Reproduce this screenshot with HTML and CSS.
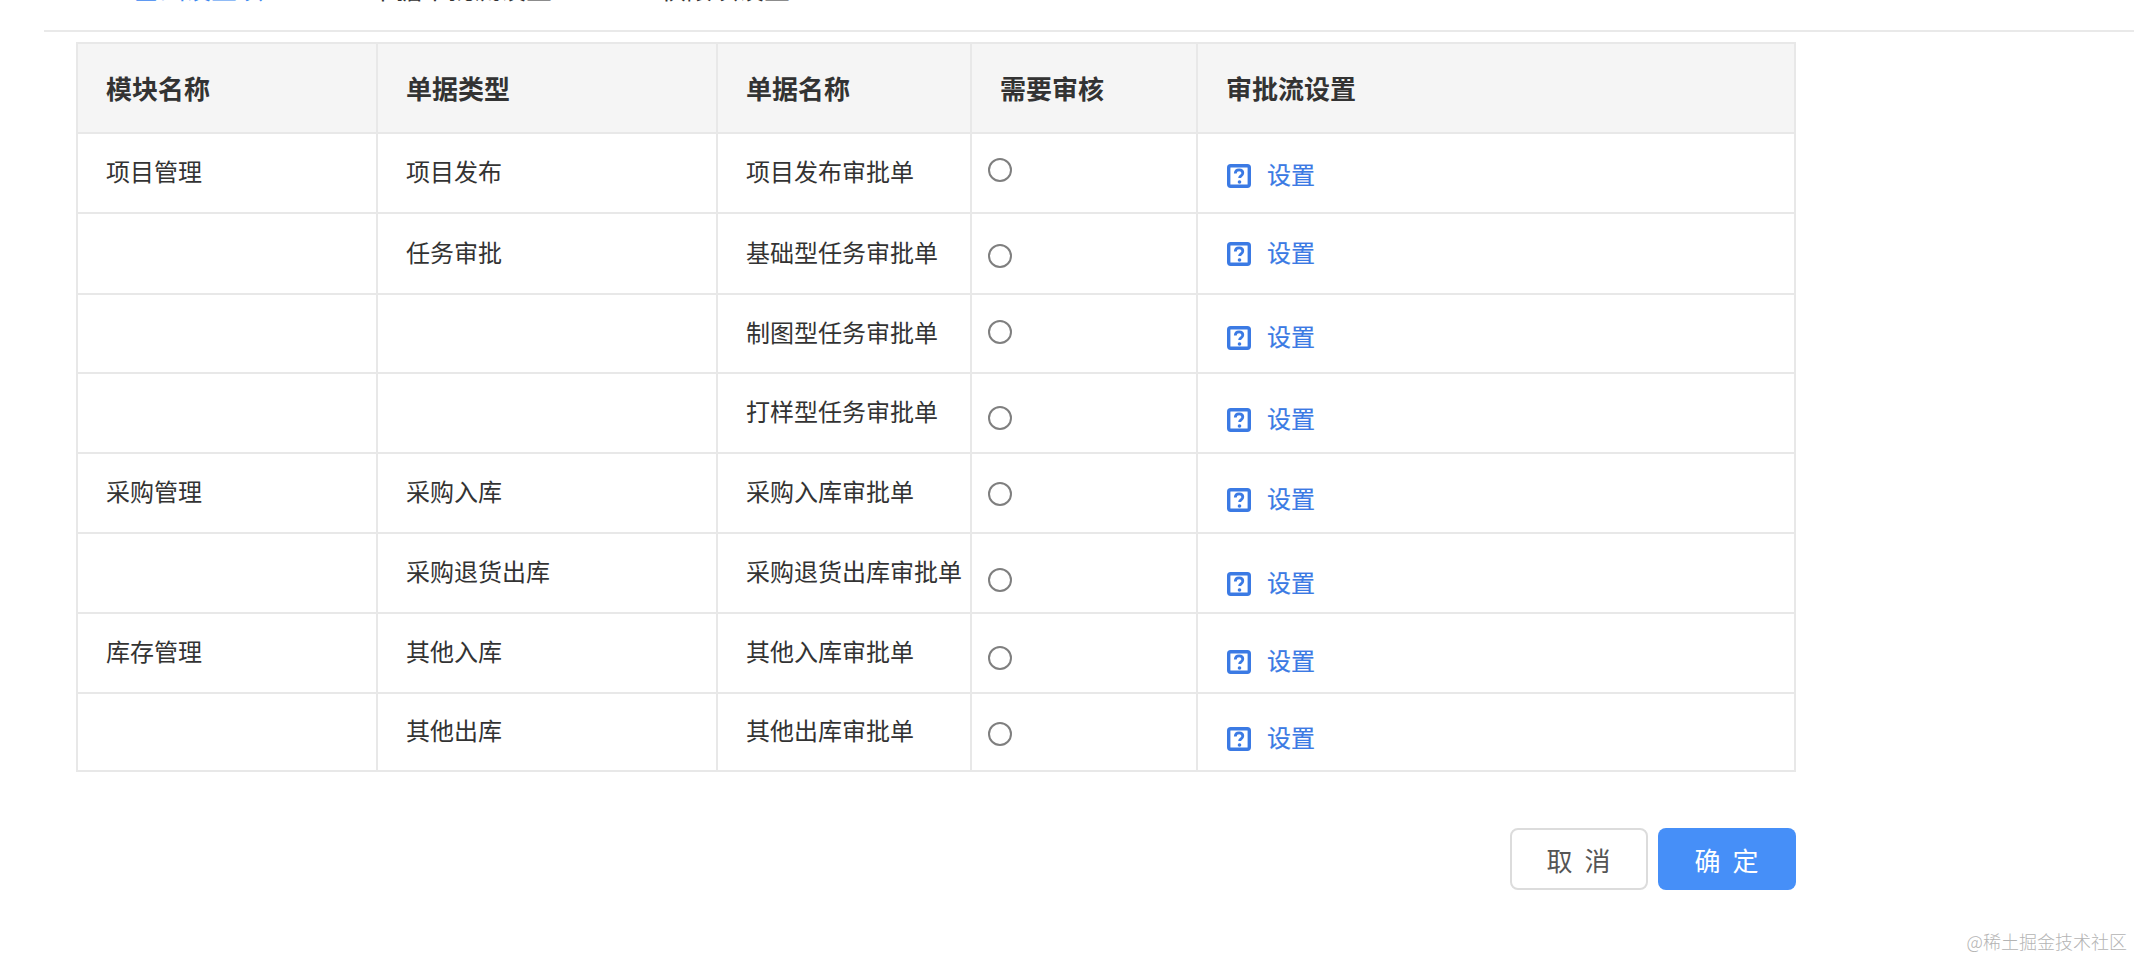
FILE: index.html
```html
<!DOCTYPE html>
<html lang="zh-CN">
<head>
<meta charset="utf-8">
<title>审批流设置</title>
<link rel="stylesheet" href="styles.css">
</head>
<body>
<svg class="defs" width="0" height="0" aria-hidden="true">
  <symbol id="q" viewBox="0 0 24 24">
    <rect x="1.7" y="1.7" width="20.6" height="20.6" rx="2" fill="none" stroke="#3b7ae4" stroke-width="3.4"/>
    <path d="M8.3 9.6c0-2.3 1.6-3.8 3.8-3.8s3.7 1.3 3.7 3.2c0 1.5-.9 2.3-1.9 3-.9.6-1.3 1.1-1.3 2" fill="none" stroke="#3b7ae4" stroke-width="2.8"/>
    <circle cx="12.5" cy="18" r="1.8" fill="#3b7ae4"/>
  </symbol>
</svg>
<nav class="tabs">
  <span class="tab tab-active">基础设置项</span>
  <span class="tab tab-second">单据审批流设置</span>
  <span class="tab tab-third">权限项设置</span>
</nav>
<main class="panel">
  <table class="grid">
    <colgroup>
      <col class="c1"><col class="c2"><col class="c3"><col class="c4"><col class="c5">
    </colgroup>
    <thead>
      <tr><th>模块名称</th><th>单据类型</th><th>单据名称</th><th>需要审核</th><th>审批流设置</th></tr>
    </thead>
    <tbody>
      <tr class="r1"><td>项目管理</td><td>项目发布</td><td>项目发布审批单</td><td class="radio-cell"><span class="radio"></span></td><td class="link-cell"><a class="link"><svg class="q"><use href="#q"/></svg><span>设置</span></a></td></tr>
      <tr class="r2"><td></td><td>任务审批</td><td>基础型任务审批单</td><td class="radio-cell"><span class="radio"></span></td><td class="link-cell"><a class="link"><svg class="q"><use href="#q"/></svg><span>设置</span></a></td></tr>
      <tr class="r3"><td></td><td></td><td>制图型任务审批单</td><td class="radio-cell"><span class="radio"></span></td><td class="link-cell"><a class="link"><svg class="q"><use href="#q"/></svg><span>设置</span></a></td></tr>
      <tr class="r4"><td></td><td></td><td>打样型任务审批单</td><td class="radio-cell"><span class="radio"></span></td><td class="link-cell"><a class="link"><svg class="q"><use href="#q"/></svg><span>设置</span></a></td></tr>
      <tr class="r5"><td>采购管理</td><td>采购入库</td><td>采购入库审批单</td><td class="radio-cell"><span class="radio"></span></td><td class="link-cell"><a class="link"><svg class="q"><use href="#q"/></svg><span>设置</span></a></td></tr>
      <tr class="r6"><td></td><td>采购退货出库</td><td>采购退货出库审批单</td><td class="radio-cell"><span class="radio"></span></td><td class="link-cell"><a class="link"><svg class="q"><use href="#q"/></svg><span>设置</span></a></td></tr>
      <tr class="r7"><td>库存管理</td><td>其他入库</td><td>其他入库审批单</td><td class="radio-cell"><span class="radio"></span></td><td class="link-cell"><a class="link"><svg class="q"><use href="#q"/></svg><span>设置</span></a></td></tr>
      <tr class="r8"><td></td><td>其他出库</td><td>其他出库审批单</td><td class="radio-cell"><span class="radio"></span></td><td class="link-cell"><a class="link"><svg class="q"><use href="#q"/></svg><span>设置</span></a></td></tr>
    </tbody>
  </table>
  <div class="actions">
    <button class="btn btn-cancel">取 消</button>
    <button class="btn btn-ok">确 定</button>
  </div>
</main>
<footer class="mark">@稀土掘金技术社区</footer>
</body>
</html>
```
FILE: styles.css
```css
* { box-sizing: border-box; }
html, body { height: 100%; }
body {
  margin: 0;
  width: 2134px;
  height: 958px;
  overflow: hidden;
  background: #fff;
  color: #333;
  font-family: "Noto Sans CJK SC", "Noto Sans", sans-serif;
  font-size: 24px;
  display: flex;
  flex-direction: column;
}
.defs { position: absolute; }
.tabs {
  height: 32px;
  margin-left: 44px;
  border-bottom: 2px solid #e9e9e9;
  padding-left: 89px;
  display: flex;
  align-items: flex-end;
  overflow: hidden;
  flex: none;
  font-size: 26px;
}
.tab {
  line-height: 34px;
  margin-bottom: 25px;
  flex: none;
}
.tab-active { color: #3b87f0; width: 237px; }
.tab-second { color: #333; width: 290px; }
.panel {
  width: 1796px;
  padding-left: 76px;
  padding-top: 10px;
  flex: none;
}
.grid {
  width: 1718px;
  table-layout: fixed;
  border-collapse: collapse;
  border: 2px solid #e6e6e6;
}
.c1 { width: 300px; }
.c2 { width: 340px; }
.c3 { width: 254px; }
.c4 { width: 226px; }
.c5 { width: 598px; }
th, td {
  border: 2px solid #e8e8e8;
  padding: 0 0 0 28px;
  text-align: left;
  vertical-align: middle;
  white-space: nowrap;
}
th {
  height: 90px;
  background: #f5f5f5;
  font-weight: 700;
  font-size: 26px;
  padding-bottom: 2px;
}
td { font-weight: 400; padding-bottom: 5px; }
.r1 { --radio: 24px; --link: 28px; height: 80px; }
.r2 { --radio: 30px; --link: 26px; height: 81px; }
.r3 { --radio: 25px; --link: 29px; height: 79px; }
.r4 { --radio: 32px; --link: 32px; height: 80px; }
.r5 { --radio: 28px; --link: 32px; height: 80px; }
.r6 { --radio: 34px; --link: 36px; height: 80px; }
.r7 { --radio: 32px; --link: 34px; height: 80px; }
.r8 { --radio: 28px; --link: 31px; height: 78px; }
td.radio-cell {
  vertical-align: top;
  padding: var(--radio) 0 0 16px;
}
td.link-cell {
  vertical-align: top;
  padding: var(--link) 0 0 29px;
}
.radio {
  display: block;
  width: 24px;
  height: 24px;
  border: 2px solid #7f7f7f;
  border-radius: 50%;
}
.link {
  display: flex;
  align-items: center;
  gap: 16px;
  color: #3b7ae4;
  line-height: 24px;
}
.link span { margin-bottom: 3px; -webkit-text-stroke: 0.2px #3b7ae4; }
.q { width: 24px; height: 24px; flex: none; }
.actions {
  display: flex;
  justify-content: flex-end;
  gap: 10px;
  margin-top: 56px;
}
.btn {
  width: 138px;
  height: 62px;
  border-radius: 8px;
  font: inherit;
  font-size: 26px;
  letter-spacing: 3px;
  padding: 0 0 0 2px;
}
.btn-cancel { background: #fff; border: 2px solid #dcdcdc; color: #555; }
.btn-ok { background: #468ff8; border: 0; color: #fff; }
.mark {
  margin-top: auto;
  padding: 0 7px 5px 0;
  text-align: right;
  color: #b4b4b4;
  font-size: 18px;
  line-height: 24px;
  font-weight: 300;
}
```
